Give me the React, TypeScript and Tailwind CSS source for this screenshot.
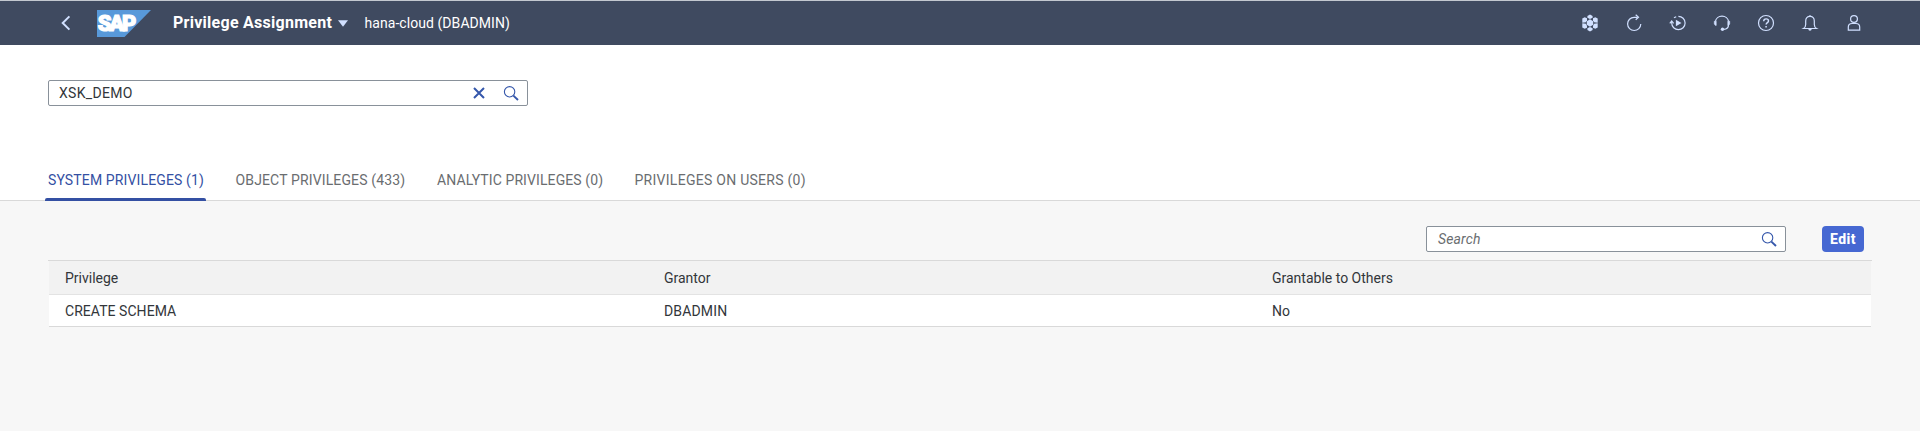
import type { ReactNode } from "react";

function Icon({ children, label }: { children: ReactNode; label: string }) {
  return (
    <button aria-label={label} className="flex size-5 items-center justify-center text-[#d1e0ff]">
      <svg viewBox="0 0 18 18" className="size-[18px]" fill="none" stroke="currentColor" strokeWidth="1.2">
        {children}
      </svg>
    </button>
  );
}

function SearchIcon() {
  return (
    <svg viewBox="0 0 16 16" className="size-4 text-[#3557ab]" fill="none" stroke="currentColor">
      <circle cx="6.6" cy="6.8" r="5.2" strokeWidth="1.1" />
      <path d="M10.4 10.6 15 15" strokeWidth="1.9" />
    </svg>
  );
}

function SapLogo() {
  return (
    <svg viewBox="0 0 54 27" className="h-[27px] w-[54px]" role="img" aria-label="SAP">
      <path d="M0 0H54L27.5 27H0Z" fill="#5899da" />
      <text
        x="0.8"
        y="21.3"
        textLength="38.5"
        lengthAdjust="spacing"
        className="fill-white stroke-white font-['Roboto',sans-serif] text-[22px] font-black"
        strokeWidth="1.2"
      >
        SAP
      </text>
    </svg>
  );
}

function ShellBar() {
  return (
    <header className="flex h-[45px] items-center border-t border-[#c3c8d0] bg-[#3f4a60] pr-14 pl-[61px] text-white">
      <svg viewBox="0 0 10 16" className="h-4 w-2.5 text-[#d1e0ff]" fill="none" stroke="currentColor" strokeWidth="2">
        <path d="M8.4 1.4 1.7 8l6.7 6.6" />
      </svg>
      <div className="ml-[26px]">
        <SapLogo />
      </div>
      <h1 className="ml-[22px] w-[160px] text-base leading-5 font-bold tracking-[0.27px] whitespace-nowrap">
        Privilege Assignment
      </h1>
      <svg viewBox="0 0 10 7" className="mt-px ml-[5px] h-[7px] w-2.5 fill-[#d1e0ff]">
        <path d="M0 .3h10L5 6.8Z" />
      </svg>
      <span className="ml-[16.500px] text-sm tracking-[0.06px]">hana-cloud (DBADMIN)</span>
      <nav className="ml-auto flex gap-6">
        <Icon label="Cloud central">
          <g fill="currentColor" stroke="none">
            <path d="m9 5.3 3.2 1.85v3.7L9 12.7l-3.2-1.85v-3.7Z" />
            <path d="m9 .6 2.6 1.3v1.9L9 5 6.4 3.8V1.9Z" />
            <path d="m9 13 2.6 1.2v1.9L9 17.4l-2.6-1.3v-1.9Z" />
            <path d="M3.7 3.2 6 4.3v1.9L4.9 8.3l-3.6.4V4.5Z" />
            <path d="M14.3 3.2 12 4.3v1.9l1.1 2.1 3.6.4V4.5Z" />
            <path d="M3.7 14.8 6 13.7v-1.9L4.9 9.7l-3.6-.4v4.2Z" />
            <path d="M14.3 14.8 12 13.7v-1.9l1.1-2.1 3.6-.4v4.2Z" />
          </g>
        </Icon>
        <Icon label="Refresh">
          <path d="M12.6 3.3H9.1a6.6 6.6 0 1 0 6.7 6.7" />
          <path d="m10.7.8 2.8 2.5-2.8 2.5" />
        </Icon>
        <Icon label="Auto refresh">
          <path d="M9.4 2.3a6.7 6.7 0 1 1-6.7 6.7v-.9" />
          <path d="M7.2 2.7A6.7 6.7 0 0 0 5 3.9" />
          <path d="m.8 9.3 1.9-2.4 1.9 2.4" />
          <path d="M6.9 5.8v6.4L12.5 9Z" fill="currentColor" stroke="none" />
        </Icon>
        <Icon label="Support">
          <path d="M2.4 7.5a6.65 6.2 0 0 1 13.2 0M15.6 10.5c0 3-2 4.7-5 4.8" />
          <path d="M1.3 7.2h1.9v4.2H2.5L1.3 10ZM16.7 7.2h-1.9v4.2h.7l1.2-1.4Z" fill="currentColor" strokeWidth=".6" />
          <circle cx="9.5" cy="15.3" r="1.7" fill="currentColor" stroke="none" />
        </Icon>
        <Icon label="Help">
          <circle cx="9" cy="9" r="7.5" />
          <path d="M6.7 7.2c0-1.5 1-2.3 2.4-2.3s2.4.8 2.4 2c0 1.7-2.4 1.8-2.4 3.7" strokeWidth="1.4" />
          <path d="M9.1 11.9v1.6" strokeWidth="1.5" />
        </Icon>
        <Icon label="Notifications">
          <path d="M2.5 14.5c1.7-1 2.2-2 2.2-4V6.9C4.7 4 6.3 2.4 9 2.4s4.3 1.6 4.3 4.5v3.6c0 2 .5 3 2.2 4Z" />
          <path d="M7.3 14.8h3.4c0 1.3-.7 1.9-1.7 1.9s-1.7-.6-1.7-1.9ZM8.3 1.3h1.4v1H8.3Z" fill="currentColor" stroke="none" />
        </Icon>
        <Icon label="Account">
          <circle cx="9" cy="5" r="3.4" />
          <path d="M3.3 16.2v-3.1c0-2.3 1.5-3.6 3.8-3.6h3.8c2.3 0 3.8 1.3 3.8 3.6v3.1Z" />
        </Icon>
      </nav>
    </header>
  );
}

function Tab({ children, className }: { children: ReactNode; className: string }) {
  return (
    <button role="tab" className={`h-[42px] text-left text-sm whitespace-nowrap text-[#6a6d70] ${className}`}>
      {children}
    </button>
  );
}

export default function App() {
  return (
    <div className="flex h-[431px] flex-col bg-[#f7f7f7] font-['Roboto',sans-serif] text-sm text-[#32363a]">
      <ShellBar />

      <section className="flex h-[156px] flex-col justify-between border-b border-[#d9d9d9] bg-white pt-[35px]">
        <div className="ml-12 flex h-[26px] w-[480px] items-center rounded-xs border border-[#89919a] pr-2 pl-2.5">
          <span className="tracking-[0.3px]">XSK_DEMO</span>
          <svg viewBox="0 0 12 12" className="mr-[18px] ml-auto size-3 text-[#3557ab]" stroke="currentColor" strokeWidth="2">
            <path d="m1 1 10 10M11 1 1 11" />
          </svg>
          <SearchIcon />
        </div>
        <div role="tablist" className="-mb-px flex h-[42px] pl-[45px]">
          <div className="flex w-[161px] flex-col">
            <button role="tab" aria-selected="true" className="h-[39px] pt-[3px] pl-[3px] text-left text-sm tracking-[0.13px] whitespace-nowrap text-[#3450a3]">
              SYSTEM PRIVILEGES (1)
            </button>
            <div className="h-[3px] rounded-t-xs bg-[#3450a3]" />
          </div>
          <Tab className="ml-[29px] w-[202px] pl-[0.5px] tracking-[0.14px]">OBJECT PRIVILEGES (433)</Tab>
          <Tab className="w-[197.5px] tracking-[0.1px]">ANALYTIC PRIVILEGES (0)</Tab>
          <Tab className="tracking-[0.27px]">PRIVILEGES ON USERS (0)</Tab>
        </div>
      </section>

      <main className="px-12 pt-[25px]">
        <div className="flex justify-end pr-2">
          <div className="flex h-[26px] w-[360px] items-center justify-between rounded-xs border border-[#89919a] bg-white pr-2 pl-[11px]">
            <span className="tracking-[0.15px] text-[#6a6d70] italic">Search</span>
            <SearchIcon />
          </div>
          <button className="ml-9 h-[26px] w-[42px] rounded bg-[#4668d2] text-sm font-extrabold tracking-[0.4px] text-white">
            Edit
          </button>
        </div>

        <div className="mt-2 border-t border-[#d9d9d9]">
          <div className="mx-px grid h-[34px] grid-cols-[599px_608px_1fr] items-center border-b border-[#e3e3e3] bg-[#f2f2f2] pl-4">
            <span>Privilege</span>
            <span>Grantor</span>
            <span>Grantable to Others</span>
          </div>
          <div className="mx-px grid h-8 grid-cols-[599px_608px_1fr] items-center border-b border-[#d9d9d9] bg-white pl-4">
            <span className="tracking-[0.05px]">CREATE SCHEMA</span>
            <span className="tracking-[0.15px]">DBADMIN</span>
            <span>No</span>
          </div>
        </div>
      </main>
    </div>
  );
}
